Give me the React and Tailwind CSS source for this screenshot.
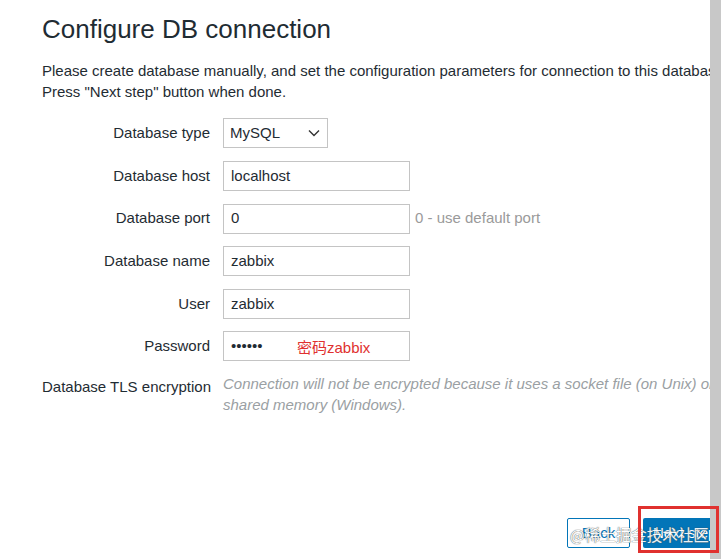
import React from 'react';

const rows = [
  { label: 'Database type', kind: 'select', value: 'MySQL' },
  { label: 'Database host', value: 'localhost' },
  { label: 'Database port', value: '0', hint: '0 - use default port' },
  { label: 'Database name', value: 'zabbix' },
  { label: 'User', value: 'zabbix' },
  { label: 'Password', kind: 'password', value: '••••••' },
];

function Field({ row }) {
  if (row.kind === 'select') {
    return (
      <div className="w-[105px] h-[30px] border border-[#c4c4c4] bg-white flex items-center justify-between pl-[6px] pr-[7px]">
        <span>{row.value}</span>
        <svg width="12" height="8" viewBox="0 0 12 8" fill="none" stroke="#333" strokeWidth="1.4">
          <path d="M1 1.5l5 5 5-5" />
        </svg>
      </div>
    );
  }
  return (
    <div className="flex items-center">
      <div className="relative w-[187px] h-[30px] border border-[#c4c4c4] bg-white flex items-center pl-[7px]">
        {row.kind === 'password' ? (
          <>
            <span className="text-[15px]">{row.value}</span>
            <span className="absolute left-[73px] top-[5px] text-[15px] text-[#e0312f] font-['Liberation_Sans','Noto_Sans_CJK_SC',sans-serif]">
              密码zabbix
            </span>
          </>
        ) : (
          <span>{row.value}</span>
        )}
      </div>
      {row.hint && <span className="ml-[5px] text-[#9a9a9a]">{row.hint}</span>}
    </div>
  );
}

export default function App() {
  return (
    <div className="flex w-[721px] h-[559px] bg-white font-['Liberation_Sans',Arial,sans-serif] text-[15px] text-[#1f2c33]">
      <div className="relative w-[710px] h-full overflow-hidden pl-[42px] pt-[14px]">
        <h1 className="text-[26px] leading-[30px] whitespace-nowrap">Configure DB connection</h1>
        <div className="mt-[17px] leading-[20.7px] whitespace-nowrap">
          <p>Please create database manually, and set the configuration parameters for connection to this database.</p>
          <p>Press "Next step" button when done.</p>
        </div>
        <div className="mt-[16px] flex flex-col gap-[12.6px]">
          {rows.map((row) => (
            <div key={row.label} className="flex items-center h-[30px]">
              <div className="w-[168px] text-right whitespace-nowrap">{row.label}</div>
              <div className="ml-[13px]">
                <Field row={row} />
              </div>
            </div>
          ))}
          <div className="flex -mt-[1px]">
            <div className="w-[168px] text-right whitespace-nowrap pt-[3px]">Database TLS encryption</div>
            <div className="ml-[13px] italic text-[#9aa0a3] leading-[21.5px] whitespace-nowrap">
              <div>Connection will not be encrypted because it uses a socket file (on Unix) or</div>
              <div>shared memory (Windows).</div>
            </div>
          </div>
        </div>
        <div className="absolute left-[567px] top-[518px] flex gap-[13px]">
          <button className="w-[63px] h-[30px] rounded-[2px] border border-[#0275b8] bg-white text-[#0275b8] text-[15px]">
            Back
          </button>
          <button className="w-[90px] h-[30px] rounded-[2px] bg-[#0275b8] text-white text-[15px] text-left pl-[10px] whitespace-nowrap">
            Next step
          </button>
        </div>
        <div className="absolute left-[570px] top-[523px] text-[15.5px] text-white whitespace-nowrap font-['Noto_Sans_CJK_SC',sans-serif] [text-shadow:0_0_1px_#555,0_0_1px_#555] opacity-90">
          @稀土掘金技术社区
        </div>
      </div>
      <div className="w-[11px] h-full bg-[#c8c8c8]" />
      <div className="absolute left-[638px] top-[506px] w-[81px] h-[47px] border-[3px] border-[#e0312f]" />
    </div>
  );
}
